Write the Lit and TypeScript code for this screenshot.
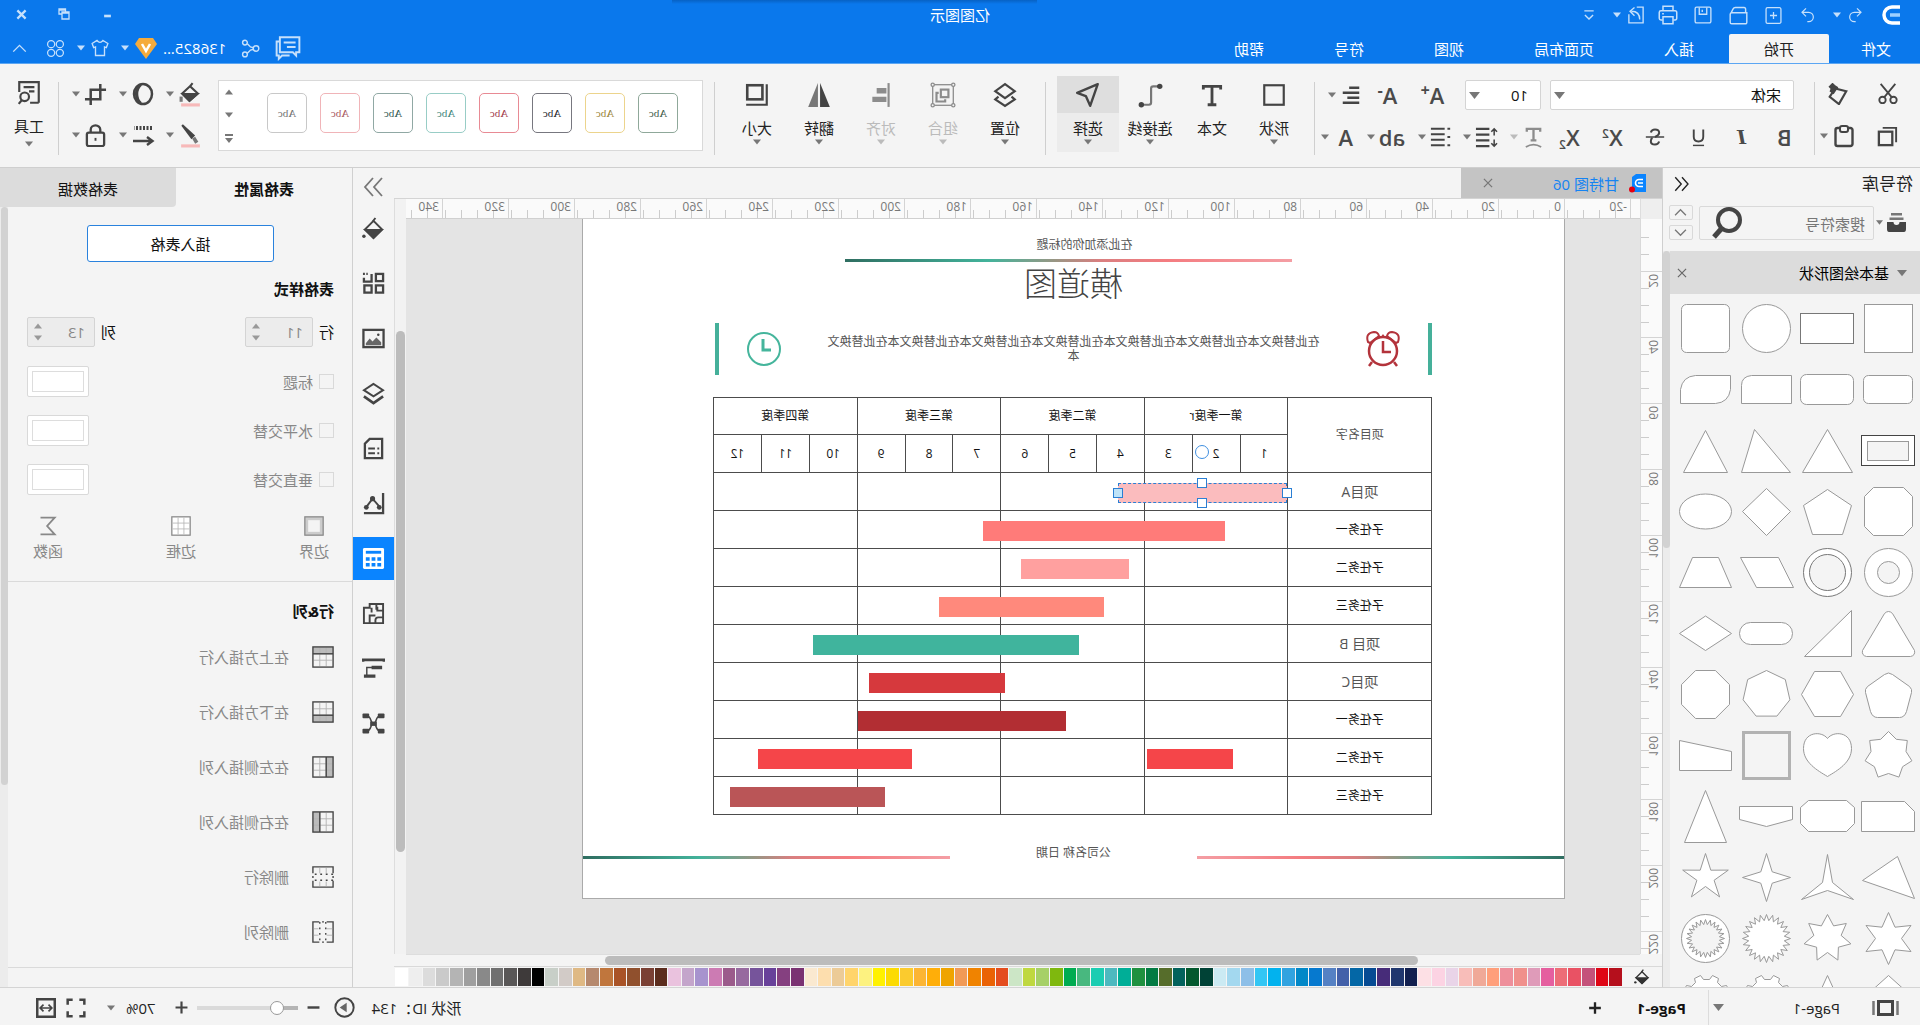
import { LitElement, html, svg, css, TemplateResult, SVGTemplateResult } from "lit";
import { customElement, state } from "lit/decorators.js";

type Frag = SVGTemplateResult;

/** Line icon on a 24-unit grid. */
const icon = (body: Frag, size = 24, weight = 2): TemplateResult => html`
  <svg class="ico" width=${size} height=${size} viewBox="0 0 24 24" fill="none" stroke="currentColor"
    stroke-width=${weight} aria-hidden="true">${body}</svg>`;

const caret = (size = 8): TemplateResult => html`
  <svg class="caret" width=${size} height=${size} viewBox="0 0 8 8" aria-hidden="true"><path d="M0 1.5h8L4 6.5z" fill="currentColor"/></svg>`;
const caretUp = html`
  <svg class="caret" width="8" height="8" viewBox="0 0 8 8" aria-hidden="true"><path d="M0 6.5h8L4 1.5z" fill="currentColor"/></svg>`;

const cross = svg`<path d="M5 5l14 14M19 5L5 19"/>`;
const bucket = svg`<path d="M10 1l3 4"/><path d="M12 4l9 9-9 9-9-9z"/><path d="M3.500 13.500h17L12 21.500z" fill="currentColor"/><circle cx="22" cy="20" r="1.800" fill="currentColor" stroke="none"/>`;
const chevL = svg`<path d="M12 3L4 12l8 9M21 3l-8 9 8 9"/>`;
const chevR = svg`<path d="M12 3l8 9-8 9M3 3l8 9-8 9"/>`;

const quick = {
  undo: svg`<path d="M9 2L3 8l6 6M3.500 8H13a7 7 0 0 1 0 14h-2"/>`,
  redo: svg`<path d="M15 2l6 6-6 6M20.500 8H11a7 7 0 0 0 0 14h2"/>`,
  add: svg`<rect x="1.500" y="1" width="21" height="22" rx="2"/><path d="M12 7v10M7 12h10"/>`,
  open: svg`<path d="M3 8V4q0-2 2-2h11q2 0 3 2l2 4M1.500 8.500h19q2 0 2 2v10q0 2-2 2h-17q-2 0-2-2z"/>`,
  save: svg`<rect x="1.500" y="1.500" width="21" height="21" rx="2"/><path d="M7 2v9h10V2M13 5v3"/>`,
  print: svg`<path d="M6 7V1.500h12V7M5 18H3.500q-2 0-2-2V9q0-2 2-2h17q2 0 2 2v7q0 2-2 2H19M6 14h12v8.500H6zM17 10.500h2"/>`,
  exportDoc: svg`<path d="M11 1.500H2.500v21h19V11"/><path d="M7 18c0-7 4-11 11-11M14 2l6 5-6 6"/>`,
};

const clip = {
  cut: svg`<path d="M4 1l12 14.500M20 1L8 15.500"/><circle cx="6" cy="18.500" r="3.500"/><circle cx="18" cy="18.500" r="3.500"/>`,
  brush: svg`<path d="M3 9l12-3 6 9-10 8z" stroke-width="2.400"/><path d="M13 5l4 6 3-2-1-3 2-2-3-3-2 2z" fill="currentColor"/>`,
  copy: svg`<path d="M3 18V3h14"/><rect x="7" y="7" width="14" height="14" stroke-width="2.400"/>`,
  paste: svg`<rect x="3.500" y="4" width="17" height="18" rx="2" stroke-width="2.400"/><rect x="8" y="2" width="8" height="6" rx="2" fill="#f4f4f4"/>`,
};

const fmt = {
  align: svg`<path d="M3 4h11M3 9.500h18M3 15h13M3 20.500h18" stroke-width="2.800"/>`,
  strike: svg`<path d="M17 6.500Q16 3 12 3 7 3 7 7q0 3 5 5M7 17.500Q8 21 12 21q5 0 5-4 0-3-2-4" stroke-width="2.400"/><path d="M1 12h22" stroke-width="1.800"/>`,
  under: svg`<path d="M6 2v9q0 6 6 6t6-6V2" stroke-width="2.400"/><path d="M5 22h14" stroke-width="1.800"/>`,
  spacing: svg`<path d="M4 3v7M4 14v7M1 6l3-3 3 3M1 18l3 3 3-3" stroke-width="1.600"/><path d="M9 3h14M9 9h14M9 15h14M9 21h14" stroke-width="2.400"/>`,
  list: svg`<path d="M8 3h15M8 9h15M8 15h15M8 21h15" stroke-width="2.400"/><path d="M2 3h3M2 12h3M2 21h3"/>`,
};

const tools = {
  shape: svg`<rect x="3" y="3" width="18" height="18"/>`,
  text: svg`<path d="M4 7V4h16v3M12 4v17M8 21h8" stroke-width="2.600"/>`,
  connector: svg`<path d="M4 4h5q2 0 2 2v13q0 2 2 2h6" stroke="#777"/><circle cx="3" cy="4" r="2.500" fill="currentColor" stroke="none"/><circle cx="20" cy="21" r="2.500" fill="currentColor" stroke="none"/>`,
  select: svg`<path d="M3 2l19 8-8 3-4 9z" stroke-linejoin="round" stroke-width="2.200"/>`,
  position: svg`<path d="M12 2l9 6.500-9 6.500-9-6.500z"/><path d="M6 13.500L3 16l9 6 9-6-3-2.500"/>`,
  group: svg`<rect x="2.500" y="2.500" width="19" height="19" stroke-width="1.200"/><rect x="7" y="7" width="7" height="7"/><path d="M16 10h2v8h-8v-2"/><g fill="#f4f4f4" stroke-width="1.200"><circle cx="2.500" cy="2.500" r="1.500"/><circle cx="21.500" cy="2.500" r="1.500"/><circle cx="2.500" cy="21.500" r="1.500"/><circle cx="21.500" cy="21.500" r="1.500"/></g>`,
  align: svg`<path d="M5 1v22" stroke-width="2"/><path d="M7 8h9M7 16h13" stroke-width="5"/>`,
  flip: svg`<path d="M11 1v22H2z" fill="currentColor" stroke="none"/><path d="M13 1v22h9z" fill="#777" stroke="none"/>`,
  size: svg`<rect x="7" y="3" width="14" height="13" stroke-width="2.400"/><path d="M3 2v19h19"/>`,
  inspect: svg`<path d="M3 21V2h18v9M3 21h8M7 6.500h10M7 10.500h5"/><circle cx="16" cy="15.500" r="4"/><path d="M18.500 18.500l3 3.500"/>`,
};

const stylers = {
  fill: svg`<path d="M3 22h18" stroke="#f7b9b9" stroke-width="3"/><path d="M10 1l3 4M12.500 4L20 11l-7 7-8-7z"/><path d="M5.500 11.500h14L13 18z" fill="currentColor"/><path d="M21 14v5" stroke="#777" stroke-width="3"/>`,
  shadow: svg`<ellipse cx="12" cy="12" rx="9" ry="10" stroke-width="2.500"/><path d="M14 3a9 10 0 0 1 0 18 11 12 0 0 0 0-18z" fill="currentColor"/>`,
  crop: svg`<path d="M7 1v16h16M1 7h16v16" stroke-width="2.600"/>`,
  line: svg`<path d="M3 22h18" stroke="#f7b9b9" stroke-width="3"/><path d="M20 2l-9 12-2-2z" fill="currentColor" stroke-width="2"/><path d="M9 14l-3 5" stroke="#777" stroke-width="3.500"/>`,
  arrow: svg`<path d="M3 5h18" stroke-width="4" stroke-dasharray="2 1.500"/><path d="M22 18H3M8 14l-5.500 4L8 22" stroke-width="2.400"/>`,
  lock: svg`<rect x="3" y="9" width="18" height="14" rx="2" stroke-width="2.400"/><path d="M7 9V6a5 4.500 0 0 1 10 0v3" stroke-width="2.400"/><path d="M12 14.500v3"/>`,
};

const side: { id: string; name: string; body: Frag }[] = [
  { id: "fill", name: "填充", body: bucket },
  { id: "grid", name: "符号", body: svg`<g stroke-width="2.400"><rect x="2" y="2" width="7.500" height="7.500"/><path d="M14 2v8h8V6M18 2h1.500M21 2h2"/><rect x="2" y="14" width="7.500" height="7.500"/><rect x="14" y="14" width="7.500" height="7.500"/></g>` },
  { id: "image", name: "图片", body: svg`<rect x="1.500" y="3" width="21" height="18" stroke-width="2.400"/><path d="M4 19v-3l5-5 4 4 3-3 4 5v2z" fill="#666" stroke="none"/><circle cx="7" cy="8" r="1.300" fill="currentColor" stroke="none"/>` },
  { id: "layers", name: "图层", body: svg`<path d="M12 2l10 6.500-10 6.500L2 8.500z"/><path d="M2 15l10 7 10-7" stroke-width="2.800"/>` },
  { id: "page", name: "页面", body: svg`<path d="M3 2h13l5 5v15H3z" stroke-width="2.400"/><path d="M6 12h2M6 17h2M10.500 12h7M10.500 17h7"/>` },
  { id: "chart", name: "图表", body: svg`<path d="M2 1v21h20" stroke-width="2.400"/><path d="M6 15l7-8 6 8"/><g fill="currentColor" stroke="none"><circle cx="6" cy="16" r="2.500"/><circle cx="13" cy="7" r="2.700"/><circle cx="19.500" cy="16" r="2.500"/></g>` },
  { id: "table", name: "表格", body: svg`<rect x="1" y="1" width="22" height="22" rx="1.500" fill="currentColor" stroke="none"/><path d="M4 5.500h16" stroke="#0a84ff" stroke-width="3"/><path d="M4 12.500h4M10 12.500h4M16 12.500h4M4 18.500h4M10 18.500h4M16 18.500h4" stroke="#0a84ff" stroke-width="3.500"/>` },
  { id: "plan", name: "平面图", body: svg`<path d="M2 2h14v4h6v16H2zM2 9h6V5M9 2v6M14 6v5M2 16h5q3 0 3 3v3M10 14h5M16 14v8M14 14h3"/>` },
  { id: "gantt", name: "甘特图", body: svg`<path d="M1 5V3h22v2M1 3h22" stroke-width="3"/><path d="M3 11h11M10 20h12" stroke-width="3.500"/><path d="M13 11h6v8" stroke-width="1.500"/>` },
  { id: "mind", name: "思维导图", body: svg`<path d="M4 4c7 0 4 8 8 8s1-8 8-8M4 20c7 0 4-8 8-8s1 8 8 8" stroke-width="1.600"/><g fill="currentColor" stroke="none"><rect x="0.500" y="1.500" width="7" height="5" rx="1"/><rect x="16.500" y="1.500" width="7" height="5" rx="1"/><rect x="0.500" y="17.500" width="7" height="5" rx="1"/><rect x="16.500" y="17.500" width="7" height="5" rx="1"/><rect x="8.500" y="10" width="7" height="4.500"/></g>` },
];

/** Star or burst outline with n outer points. */
const star = (n: number, outer: number, inner: number): string =>
  Array.from({ length: n * 2 }, (_, i) => {
    const r = i % 2 ? inner : outer;
    const a = (Math.PI * i) / n - Math.PI / 2;
    return `${(r * Math.cos(a)).toFixed(1)},${(r * Math.sin(a)).toFixed(1)}`;
  }).join(" ");

const ngon = (n: number, r: number, turn = 0): string =>
  Array.from({ length: n }, (_, i) => {
    const a = (2 * Math.PI * (i + turn)) / n - Math.PI / 2;
    return `${(r * Math.cos(a)).toFixed(1)},${(r * Math.sin(a)).toFixed(1)}`;
  }).join(" ");

const gear = svg`<path d="M-20 0v-6l-4-2 3-6 5 1 4-4-1-4 6-3 3 4h6l3-4 6 3-1 4 4 4 5-1 3 6-4 2v6z"/>`;

const shapes: Frag[] = [
  svg`<rect x="-24" y="-24" width="48" height="48"/>`,
  svg`<rect x="-26" y="-15" width="53" height="30" stroke="#777"/>`,
  svg`<circle r="24"/>`,
  svg`<rect x="-24" y="-24" width="48" height="48" rx="5"/>`,
  svg`<rect x="-24" y="-14" width="49" height="28" rx="5"/>`,
  svg`<rect x="-26" y="-15" width="53" height="30" rx="6"/>`,
  svg`<path d="M-25-14h40q10 1 10 10v18h-50z"/>`,
  svg`<path d="M-25-14h35q13 1 15 14v14h-35q-13-1-15-14z"/>`,
  svg`<rect x="-26" y="-15" width="53" height="30" stroke="#444"/><rect x="-20" y="-9" width="41" height="19" fill="#f4f4f4"/>`,
  svg`<path d="M0-21L25 22h-50z"/>`,
  svg`<path d="M12-21L25 22h-49z"/>`,
  svg`<path d="M0-20L22 22h-44z"/>`,
  svg`<path d="M-15-24h30l9 9v30l-9 9h-30l-9-9v-30z"/>`,
  svg`<path d="M0-22L24-6 15 23h-30L-24-6z"/>`,
  svg`<path d="M0-23L24 0 0 24-24 0z"/>`,
  svg`<ellipse rx="26" ry="17.500"/>`,
  svg`<circle r="24"/><circle r="11" fill="#f4f4f4"/>`,
  svg`<circle r="24" stroke="#777"/><circle r="18" fill="#f4f4f4" stroke="#777"/>`,
  svg`<path d="M-12-15h38L10 15h-37z"/>`,
  svg`<path d="M-13-15h26L26 15h-52z"/>`,
  svg`<path d="M-4-20q4-4 8 0L26 17q1 5-4 6h-44q-5-1-4-6z"/>`,
  svg`<path d="M-24-23v46h47z"/>`,
  svg`<rect x="-26" y="-11" width="53" height="22" rx="11"/>`,
  svg`<path d="M0-17.500L26 0 0 17-26 0z"/>`,
  svg`<path d="M-4-20q4-3 8 0L21-8q3 3 2 6l-5 19q-2 6-7 6h-22q-5 0-7-6l-5-19q-1-3 2-6z"/>`,
  svg`<path d="M-13-23h26L26 0 13 22h-26L-26 0z"/>`,
  svg`<polygon points=${ngon(7, 24)}/>`,
  svg`<polygon points=${ngon(8, 26, 0.5)}/>`,
  svg`<polygon points=${star(7, 24, 18)}/>`,
  svg`<path d="M0-17c6-8 24-7 24 10C24 7 10 15 0 21-10 15-24 7-24-7c0-17 18-18 24-10z"/>`,
  svg`<rect x="-23" y="-23" width="46" height="46" stroke="#b2b2b2" stroke-width="3" fill="#f4f4f4"/>`,
  svg`<path d="M-26-4L26-15v30h-52z" transform="matrix(-1 0 0 1 0 0)"/>`,
  svg`<path d="M-16-15h43v30h-53V-5z"/>`,
  svg`<path d="M-19-16h38l8 7v16l-8 8h-38l-8-8V-9z"/>`,
  svg`<path d="M-26-10h53V3L0 10-26 3z"/>`,
  svg`<path d="M0-26L21 26h-42z"/>`,
  svg`<path d="M-9-21L26 3l-52 18z"/>`,
  svg`<path d="M0-23L5 5 26 22 0 13-26 22-5 5z"/>`,
  svg`<polygon points=${star(4, 24, 8)}/>`,
  svg`<polygon points=${star(5, 24, 9)}/>`,
  svg`<polygon points=${star(6, 26, 13)}/>`,
  svg`<polygon points=${star(7, 24, 14)}/>`,
  svg`<polygon points=${star(24, 24, 18)}/>`,
  svg`<circle r="24"/><polygon points=${star(24, 19, 14)} fill="#f4f4f4"/>`,
  svg`<path d="M0-24L20-6 0 20-20-6z"/>`,
  svg`<path d="M0-24L20 20h-40z"/>`,
  gear,
  gear,
];
// The slanted block is lower on its left side.
shapes[31] = svg`<path d="M-26-4L26-15v30h-52z"/>`;

const palette = (
  "b50f1c df0615 c4527a e95264 ed6d77 e55f9f df9bb9 f0908c ee8f9b ff9f7b f0a998 f8bdb9 e9d4e8 fcd3e3 fde0e5 " +
  "12204f 20376e 472c79 064b93 0467a6 4360a9 5581c4 0679cf 0188c8 31a3e0 02b2ee 33c6f4 8dbfe8 a3d8ef cbeaf3 " +
  "004236 03582e 02625c 566d2b 037b43 1f9140 00ae97 4db9bf 1bcdb2 48b87f 00ac51 7fb80e a6d067 bfd840 cce6c6 " +
  "e44d1e ea6205 f08300 f19a56 efa400 ffae09 fcb534 fbcb2e fcdb02 fff100 fdf280 ffd46b eccb97 fddeae fae9d0 " +
  "7a3272 854080 68419a 76549b 976a9f 9b5b8b cc7bb3 a793ce c4a5cb eac2de 5b2c1d 7a4034 90502d a95327 c0763d " +
  "b6896e dfb984 d2cbc7 c8cfc8 000000 3e3a3a 595757 707070 898989 9f9f9f b4b4b4 cacaca dcdcdc eeeeee ffffff"
).split(" ");

const abcStyles: [string, string][] = [
  ["#8fa89a", "#3c5a48"], ["#ecd48c", "#9a8438"], ["#77777f", "#222228"], ["#e88a94", "#a03848"],
  ["#98cdc6", "#3c8478"], ["#90a8a4", "#305850"], ["#f0b4b8", "#a85860"], ["#c8c8c8", "#707070"],
];

interface Task { name: string; soft?: boolean; bars: { at: number; len: number; color: string; picked?: boolean }[] }
/** Positions are offsets on a chart that is 718 units wide. */
const tasks: Task[] = [
  { name: "项目A", soft: true, bars: [{ at: 145, len: 169, color: "#fbbcbe", picked: true }] },
  { name: "子任务一", bars: [{ at: 207, len: 241, color: "#ff7b79" }] },
  { name: "子任务二", bars: [{ at: 303, len: 107, color: "#ffa09f" }] },
  { name: "子任务三", bars: [{ at: 328, len: 164, color: "#ff897c" }] },
  { name: "项目 B", soft: true, bars: [{ at: 353, len: 265, color: "#40b49d" }] },
  { name: "项目C", soft: true, bars: [{ at: 426, len: 136, color: "#d6393d" }] },
  { name: "子任务一", bars: [{ at: 365, len: 208, color: "#b22e33" }] },
  { name: "子任务二", bars: [{ at: 199, len: 86, color: "#f54549" }, { at: 519, len: 154, color: "#f54549" }] },
  { name: "子任务三", bars: [{ at: 546, len: 155, color: "#ba5557" }] },
];

const cellLines = svg`<path d="M8.500 2v20M15.500 2v20M2 8.500h20M2 15.500h20" stroke="#b4b4b4" stroke-width="1"/>`;
const frame = svg`<rect x="1" y="1" width="22" height="22" stroke-width="1.500"/>`;
const rowOps: [string, Frag][] = [
  ["在上方插入行", svg`<rect x="1" y="1" width="22" height="8" fill="#bbb" stroke="none"/>${cellLines}<path d="M1 8.500h22" stroke-width="1.500"/>${frame}`],
  ["在下方插入行", svg`<rect x="1" y="15" width="22" height="8" fill="#bbb" stroke="none"/>${cellLines}<path d="M1 15.500h22" stroke-width="1.500"/>${frame}`],
  ["在左侧插入列", svg`<rect x="1" y="1" width="8" height="22" fill="#bbb" stroke="none"/>${cellLines}<path d="M8.500 1v22" stroke-width="1.500"/>${frame}`],
  ["在右侧插入列", svg`<rect x="15" y="1" width="8" height="22" fill="#bbb" stroke="none"/>${cellLines}<path d="M15.500 1v22" stroke-width="1.500"/>${frame}`],
  ["删除行", svg`<path d="M1 8V1h22v7M1 16v7h22v-7" stroke-width="1.500"/><path d="M8.500 2v6M15.500 2v6M8.500 17v5M15.500 17v5" stroke="#b4b4b4" stroke-width="1"/><path d="M1 9h22M1 15.500h22" stroke-width="1.500" stroke-dasharray="2 4"/><path d="M1 11v2M23 11v2" stroke-width="1.500"/>`],
  ["删除列", svg`<path d="M8 1H1v22h7M16 1h7v22h-7" stroke-width="1.500"/><path d="M2 8.500h6M2 15.500h6M17 8.500h5M17 15.500h5" stroke="#b4b4b4" stroke-width="1"/><path d="M9 1v22M15.500 1v22" stroke-width="1.500" stroke-dasharray="2 4"/><path d="M11 1h2M11 23h2" stroke-width="1.500"/>`],
];

const range = (from: number, to: number, step: number): number[] =>
  Array.from({ length: Math.floor((to - from) / step) + 1 }, (_, i) => from + i * step);

@customElement("app-root")
export class AppRoot extends LitElement {
  @state() private menu = "开始";
  @state() private panel = "table";

  static styles = css`
    :host { display: block; }
    * { box-sizing: border-box; }
    button { font: inherit; color: inherit; background: none; border: 0; padding: 0; cursor: pointer; }
    svg { display: block; flex: none; }
    .app { display: flex; flex-direction: column; height: 100vh; transform: scaleX(-1); background: #f4f4f4; color: #222;
      font: 15px/20px "Open Sans", "Noto Sans CJK SC", sans-serif; white-space: nowrap; overflow: hidden; }
    .caret { color: #777; }

    .blue { background: #0a78ec; color: #fff; border-bottom: 1px solid #5ba6f3; position: relative; }
    .shade { position: absolute; top: 0; left: 46%; width: 19%; height: 4px; background: linear-gradient(#0762c4, #0a78ec); }
    .blue .ico { color: #c6e0fb; }
    .blue .caret { color: #c6e0fb; }
    .title { display: grid; grid-template-columns: 1fr auto 1fr; align-items: start; height: 34px; line-height: 30px; }
    .quick { display: flex; align-items: center; padding-left: 20px; height: 30px; }
    .quick button { width: 35px; height: 30px; display: flex; align-items: center; justify-content: center; }
    .quick .split { gap: 6px; width: 44px; }
    .quick .logo { margin-right: 12px; }
    .win { display: flex; justify-content: flex-end; height: 28px; }
    .win button { width: 43px; display: grid; place-items: center; }
    .menus { display: flex; height: 29px; }
    .menus .tab { padding: 0 35px; }
    .menus .tab:first-child { padding: 0 32px 0 29px; }
    .menus .tab[aria-selected="true"] { background: #f4f4f4; color: #222; border-radius: 2px 2px 0 0; }
    .me { margin-left: auto; display: flex; align-items: center; gap: 12px; padding: 0 12px 1px 0; }
    .me button { display: flex; align-items: center; gap: 6px; }
    .me .social { margin-right: 3px; }
    .me .fold { margin-left: 7px; }

    .ribbon { display: flex; height: 104px; padding-top: 10px; border-bottom: 1px solid #cfcfcf; color: #444; }
    .group { display: flex; height: 84px; }
    .group + .group { border-image: linear-gradient(transparent 9px, #cfcfcf 9px 80px, transparent 80px) 1; border-left: 1px solid; }
    .ribbon .split { display: flex; align-items: center; gap: 4px; }
    .ribbon .btn { display: grid; place-items: center; }
    .clip { display: grid; grid-template: 40px 44px / 36px 41px; column-gap: 14px; padding-left: 14px; }
    .clip .brush { width: 36px; }
    .font { flex-direction: column; width: 500px; padding-left: 8px; }
    .line { display: flex; height: 42px; align-items: center; }
    .pick { display: grid; align-items: center; height: 30px; }
    .pick > * { grid-area: 1 / 1; }
    .pick .caret { justify-self: end; margin-right: 4px; pointer-events: none; }
    .pick.face { width: 244px; margin: 0 9px 0 12px; }
    .pick.pt { width: 76px; margin-right: 10px; }
    select { appearance: none; font: inherit; color: #111; width: 100%; height: 30px; padding: 0 12px; background: #fff;
      border: 1px solid #d4d4d4; border-radius: 2px; }
    .line .btn { width: 45px; height: 36px; }
    .line.row2 .btn { width: 43px; }
    .line .split { flex: 1; height: 36px; padding-left: 3px; }
    .glyph { font-size: 22px; line-height: 24px; font-weight: 600; color: #4a4a4a; }
    .glyph sup, .glyph sub { font-size: 12px; line-height: 0; }
    .glyph sup.sign { font-size: 16px; font-weight: 700; }
    .glyph sup { vertical-align: 8px; } .glyph sub { vertical-align: -3px; }
    .slant { font-style: italic; font-family: "DejaVu Serif", serif; font-size: 19px; }
    .off { color: #a4a4a4; } .off .ico { color: #8c8c8c; } .off .caret { color: #bbb; }
    .tools { padding: 2px 11px 6px 9px; }
    .tool { width: 62px; display: flex; flex-direction: column; align-items: center; color: #444; }
    .tool .pic { width: 100%; height: 37px; display: grid; place-items: center; }
    .tool .name { color: #222; padding-top: 5px; line-height: 20px; }
    .tool.off .name { color: #bbb; }
    .tool.on { background: #ececec; } .tool.on .pic { background: #dedede; }
    .look { flex: 1; padding: 6px 0 7px 11px; }
    .gallery { flex: 1; display: flex; justify-content: space-between; align-items: center; background: #fff; border: 1px solid #d9d9d9; padding: 0 6px 0 24px; }
    .cards { display: flex; gap: 13px; padding-bottom: 6px; overflow: hidden; }
    .card { width: 40px; height: 40px; border: 1px solid; border-radius: 5px; font: 11px/38px "Liberation Serif", serif; }
    .steps { display: flex; flex-direction: column; justify-content: space-between; height: 56px; }
    .group.stylers { border: 0; display: grid; grid-template: 40px 42px / 48px 48px 48px; padding: 0 3px 0 12px; }
    .stylers .split { padding-left: 3px; gap: 4px; }
    .end { width: 59px; justify-content: center; }
    .end .tool { width: 50px; }
    .end .caret { margin-top: 4px; }

    .body { flex: 1; display: flex; min-height: 0; }
    .library { width: 258px; border-right: 1px solid #cfcfcf; display: flex; flex-direction: column; }
    .libhead { display: flex; justify-content: space-between; align-items: center; height: 32px; padding: 0 10px 0 7px; font-size: 17px; }
    .find { display: flex; align-items: center; padding: 5px 6px 11px 14px; }
    .find .kind { display: flex; align-items: center; gap: 4px; width: 32px; }
    .search { display: flex; align-items: center; width: 175px; height: 34px; border: 1px solid #d9d9d9; border-radius: 2px; padding: 0 12px 0 8px; }
    input { font: inherit; color: inherit; }
    .search input { flex: 1; min-width: 0; border: 0; background: none; padding: 2px 0 0; }
    .search input::placeholder { color: #777; opacity: 1; }
    .updown { display: grid; gap: 5px; margin-left: 6px; }
    .updown button { width: 24px; height: 15px; border: 1px solid #d9d9d9; border-radius: 2px; display: grid; place-items: center; color: #777; }
    .shelf { flex: 1; display: flex; min-height: 0; }
    .shelfmain { flex: 1; overflow: hidden; }
    .cat { display: flex; align-items: center; gap: 8px; height: 43px; background: #dcdcdc; padding: 1px 5px 0 13px; color: #000; }
    .cat .x { margin-left: auto; color: #666; }
    .shapes { display: grid; grid-template-columns: repeat(4, 61px); padding: 4px 0 0 1px; }
    .shapes svg { fill: #fff; stroke: #999; }
    .shapes button { height: 61px; }
    .bar { display: grid; background: #ececec; }
    .bar i { display: block; background: #d2d2d2; border-radius: 4px; }
    .bar.lib { width: 7px; grid-template-rows: 297fr 439fr; }

    .work { flex: 1; min-width: 0; display: flex; flex-direction: column; }
    .docs { height: 31px; border-bottom: 1px solid #d4d4d4; }
    .doc { display: flex; align-items: center; width: 201px; height: 30px; background: #c4c4c4; color: #1583f2; padding: 0 20px 0 16px; }
    .doc .name { margin: 2px auto 0 9px; }
    .doc button { color: #777; }
    .desk { flex: 1; min-height: 0; display: grid; grid-template: 20px minmax(0, 1fr) 12px 21px / 22px minmax(0, 1fr) 12px; }
    .corner { background: #eee; border-right: 1px solid #ddd; }
    .hr { display: flex; overflow: hidden; background: #fafafa; border-bottom: 1px solid #d0d0d0; padding-left: 9px; }
    .hr span { flex: none; width: 66px; padding-left: 3px; border-left: 1px solid #d4d4d4; font-size: 12px; line-height: 16px; color: #777;
      background: repeating-linear-gradient(to right, transparent 0 15px, #ccc 15px 16px) 0 11px / 66px 20px no-repeat; }
    .hr span, .vr span { background-origin: border-box; }
    .vr { overflow: hidden; background: #fafafa; border-right: 1px solid #d9d9d9; display: flex; flex-direction: column; }
    .vr span { flex: none; height: 66px; border-top: 1px solid #d4d4d4; display: flex;
      background: repeating-linear-gradient(to bottom, transparent 0 16px, #ccc 16px 17px) 13px 0 / 10px 64px no-repeat; }
    .vr span:first-child { height: 52px; border: 0; background-position: 13px 2px; }
    .vr b { writing-mode: vertical-rl; transform: rotate(180deg); font: 12px/17px "Open Sans", sans-serif; color: #777; padding-bottom: 2px; align-self: flex-start; }
    .vbar { grid-area: 1 / 3 / 3 / 4; grid-template-rows: 132fr 522fr 102fr; background: #f2f2f2; border-right: 1px solid #ddd; padding: 0 1px; }
    .vbar i { grid-row: 2; background: #bcbcbc; border-radius: 5px; }
    .hbar { grid-area: 3 / 2 / 4 / 3; grid-template-columns: 222fr 811fr 199fr; background: #f4f4f4; border-top: 1px solid #ddd; padding: 1px 0; }
    .hbar i { grid-column: 2; background: #bcbcbc; border-radius: 5px; }
    .inks { grid-area: 4 / 1 / 5 / 4; display: flex; align-items: center; border-top: 1px solid #d9d9d9; color: #333; }
    .inks .none { width: 40px; padding-left: 12px; }
    .inks .ink { flex: 1; height: 18px; border-right: 1px solid #f4f4f4; }
    .canvas { background: #e4e4e4; overflow: hidden; }

    .page { width: 983px; height: 680px; margin-left: 75px; background: #fff; border: 1px solid #aaa; border-top: 0; padding-top: 19px;
      font-size: 12px; line-height: 14px; color: #555; }
    .sub { text-align: center; padding-right: 22px; }
    .rule { height: 3px; background: linear-gradient(to right, #f49ea4, #f47c80 28%, #d97f80 43%, #999684 53%, #43b39b 68%, #2f6e61); }
    .head { width: 447px; margin: 7px 0 2px 272px; }
    .big { margin: 0; font-size: 33px; line-height: 40px; font-weight: 300; color: #444; text-align: center; }
    .chart { width: 719px; margin-left: 132px; }
    .intro { display: flex; align-items: center; height: 52px; margin: 19px 0 22px; padding-right: 2px; }
    .intro .post { width: 4px; height: 52px; background: #45b09a; }
    .intro svg { margin: 0 34px 0 28px; }
    .intro p + svg { margin: 0 28px 0 34px; }
    .intro p { margin: 0; padding: 0 10px; flex: 1; text-align: center; white-space: normal; }
    .gantt { position: relative; }
    table { width: 100%; border-collapse: collapse; table-layout: fixed; color: #111; border: 1px solid #777; }
    th, td { border: 1px solid #4c4c4c; padding: 0; height: 38px; font-weight: 400; text-align: center; }
    .q th { height: 37px; }
    .soft { color: #555; }
    th.proj { font-size: 14px; color: #555; }
    .task { position: absolute; height: 20px; }
    .task.picked { outline: 1px dashed #2b7fd4; outline-offset: -1px; }
    .grip { position: absolute; width: 10px; height: 10px; background: #fff; border: 1px solid #2b7fd4; }
    .grip.w { left: -5px; top: 5px; } .grip.e { right: -5px; top: 5px; background: #bfe3f8; }
    .grip.n { left: calc(50% - 5px); top: -5px; } .grip.s { left: calc(50% - 5px); bottom: -5px; }
    .spin { position: absolute; left: calc(50% - 7px); top: -38px; width: 14px; height: 14px; border: 1px solid #3f8fe0; border-radius: 50%; background: #fff; }
    .foot { display: flex; justify-content: space-between; margin-top: 31px; }
    .foot .rule { width: 367px; margin-top: 10px; }
    .foot .rule:first-child { transform: rotate(180deg); }

    .dock { width: 42px; border-right: 1px solid #d0d0d0; display: flex; flex-direction: column; color: #444; }
    .dock button { height: 43px; margin-bottom: 12px; display: grid; place-items: center; }
    .dock .fold { height: 38px; margin-bottom: 1px; color: #777; }
    .dock button[aria-pressed="true"] { background: #0a84ff; color: #fff; }

    .props { width: 352px; display: flex; flex-direction: column; color: #111; }
    .ptabs { display: grid; grid-template-columns: 1fr 1fr; height: 39px; }
    .ptabs button { padding-top: 2px; }
    .ptabs [aria-selected="true"] { font-weight: 700; }
    .ptabs [aria-selected="false"] { background: #dcdcdc; border-radius: 0 0 0 4px; }
    .pbody { flex: 1; display: flex; min-height: 0; }
    .pmain { flex: 1; overflow: hidden; }
    .bar.prop { width: 8px; grid-template-rows: 578fr 202fr; padding-right: 1px; }
    section { padding: 18px 19px 0 18px; border-bottom: 1px solid #dadada; }
    .insert { display: block; width: 187px; height: 37px; margin: 0 auto; background: #fff; border: 1px solid #2a82dd; border-radius: 3px; }
    h3 { margin: 17px 0 18px; font-size: 15px; line-height: 20px; font-weight: 700; }
    .dims { display: flex; justify-content: space-between; margin-bottom: 19px; }
    .num { display: flex; align-items: center; gap: 6px; }
    .num .box { display: flex; align-items: center; justify-content: space-between; width: 68px; height: 30px; padding: 0 6px 0 9px; background: #ececec; border: 1px solid #d4d4d4; border-radius: 2px; }
    .num input { width: 30px; border: 0; padding: 0; background: none; color: #888; }
    .num .steps { height: 20px; }
    .num .caret { color: #999; }
    .opt { display: flex; justify-content: space-between; align-items: center; margin-bottom: 18px; height: 31px; color: #888; }
    .opt label { display: flex; align-items: center; gap: 6px; }
    .opt input { appearance: none; width: 15px; height: 15px; margin: 0; border: 1px solid #d9d9d9; background: #f4f4f4; }
    .swatch { width: 62px; height: 31px; padding: 4px; background: #fff; border: 1px solid #d9d9d9; border-radius: 2px; }
    .swatch i { display: block; height: 21px; border: 1px solid #ddd; }
    .trio { display: flex; justify-content: space-between; padding: 3px 6px 20px 5px; color: #888; }
    .trio button { display: grid; justify-items: center; gap: 5px; }
    section.ops { padding-top: 2px; padding-bottom: 8px; }
    .ops button { display: flex; align-items: center; gap: 23px; height: 55px; color: #888; }
    .ops .ico { color: #444; }
    .ops h3 { margin-bottom: 8px; }

    .status { display: flex; align-items: center; height: 38px; border-top: 1px solid #d4d4d4; color: #222; padding-top: 2px; }
    .status .view { width: 80px; padding-left: 21px; color: #444; }
    .status .pages { display: flex; justify-content: space-between; align-items: center; align-self: stretch; width: 132px; border-right: 1px solid #dcdcdc; padding-right: 4px; }
    .status .cur { font-weight: 700; color: #111; margin: 0 35px 0 22px; }
    .status .right { margin-left: auto; display: flex; align-items: center; color: #444; padding-right: 36px; }
    .status .right > * { flex: none; }
    .shapeid { color: #222; margin-right: 17px; }
    .play { margin-right: 14px; }
    .zoom { appearance: none; width: 101px; height: 16px; margin: 0 9px; background: linear-gradient(to right, #b4b4b4 20%, #dadada 20%) 0 6px / 100% 4px no-repeat; }
    .zoom::-webkit-slider-thumb { appearance: none; width: 14px; height: 14px; border-radius: 50%; background: #fff; border: 1px solid #999; }
    .pct { color: #222; margin: 0 11px 0 19px; }
    .status .caret { margin-right: 21px; }
    .status .pages .caret { margin-right: 0; }
    .status .right .full { margin-right: 10px; }
  `;

  private split(label: string, body: TemplateResult, off = false) {
    return html`<button class="split ${off ? "off" : ""}" aria-label=${label}>${body}${caret()}</button>`;
  }

  private tool(name: string, body: Frag, opts: { on?: boolean; off?: boolean; plain?: boolean } = {}) {
    return html`<button class="tool ${opts.on ? "on" : ""} ${opts.off ? "off" : ""}">
      <span class="pic">${icon(body, 26)}</span><span class="name">${name}</span>${opts.plain ? "" : caret()}
    </button>`;
  }

  private header() {
    const names = ["文件", "开始", "插入", "页面布局", "视图", "符号", "帮助"];
    return html`<header class="blue">
      <div class="shade"></div>
      <div class="title">
        <div class="quick">
          <svg class="logo" width="18" height="20" viewBox="0 0 18 20" fill="none" stroke-width="3.500" aria-hidden="true">
            <path d="M0 2h8a8 8 0 0 1 0 16H0" stroke="#fff"/><path d="M0 10h10" stroke="#9fd0ff"/></svg>
          <button class="split" aria-label="撤销">${icon(quick.undo, 16, 1.8)}${caret()}</button>
          <button aria-label="重做">${icon(quick.redo, 16, 1.8)}</button>
          <button aria-label="新建">${icon(quick.add, 17, 1.8)}</button>
          <button aria-label="打开">${icon(quick.open, 19, 1.8)}</button>
          <button aria-label="保存">${icon(quick.save, 18, 1.8)}</button>
          <button aria-label="打印">${icon(quick.print, 20, 1.8)}</button>
          <button class="split" aria-label="导出">${icon(quick.exportDoc, 18, 1.8)}${caret()}</button>
          <button aria-label="自定义">${icon(svg`<path d="M4 5h16M5 12l7 7 7-7"/>`, 14, 2.4)}</button>
        </div>
        <div>亿图图示</div>
        <div class="win">
          <button aria-label="最小化">${icon(svg`<path d="M3 16h18" stroke-width="7"/>`, 9)}</button>
          <button aria-label="还原">${icon(svg`<path d="M9 8V2h13v10h-6M2 8h14v14H2zM2 10h14M9 4h13"/>`, 12, 2.6)}</button>
          <button aria-label="关闭">${icon(svg`<path d="M3 3l18 18M21 3L3 21"/>`, 11, 5)}</button>
        </div>
      </div>
      <nav class="menus" role="tablist">
        ${names.map((n) => html`<button class="tab" role="tab" aria-selected=${this.menu === n} @click=${() => (this.menu = n)}>${n}</button>`)}
        <div class="me">
          <button class="social" aria-label="消息">${icon(svg`<path d="M1.500 2h18v14h-12l-3 3v-3h-3zM5 7h11M5 11h8"/><path d="M19.500 6h3v13h-2v3l-3-3h-7"/>`, 26, 1.8)}</button>
          <button class="social" aria-label="分享">${icon(svg`<circle cx="5" cy="12" r="3.500"/><circle cx="19" cy="4.500" r="3"/><circle cx="19" cy="19.500" r="3"/><path d="M8 11l4-1 4-4M8 13l4 1 4 4"/>`, 19, 1.8)}</button>
          <button>136825...<svg width="22" height="21" viewBox="0 0 22 21" aria-hidden="true"><path d="M4 0h14l4 6-11 15L0 6z" fill="#f5ab3c"/><path d="M7 6l4 7 4-7" fill="none" stroke="#fff" stroke-width="2.500"/></svg>${caret()}</button>
          <button aria-label="主题">${icon(svg`<path d="M8 2L1.500 6l2 5.500 2.500-1V22h12V10.500l2.500 1 2-5.500L16 2q-4 5-8 0z"/>`, 18, 1.8)}${caret()}</button>
          <button aria-label="应用">${icon(svg`<circle cx="6.500" cy="6.500" r="4.500"/><circle cx="17.500" cy="6.500" r="4.500"/><circle cx="6.500" cy="17.500" r="4.500"/><circle cx="17.500" cy="17.500" r="4.500"/>`, 19, 1.6)}</button>
          <button class="fold" aria-label="收起功能区">${icon(svg`<path d="M2 17L12 7l10 10"/>`, 15, 2.2)}</button>
        </div>
      </nav>
    </header>`;
  }

  private ribbon() {
    const g = (cls: string, t: unknown) => html`<span class="glyph ${cls}">${t}</span>`;
    return html`<div class="ribbon">
      <div class="group clip">
        <button class="btn" aria-label="剪切">${icon(clip.cut, 22)}</button>
        <button class="btn brush" aria-label="格式刷">${icon(clip.brush, 22)}</button>
        <button class="btn" aria-label="复制">${icon(clip.copy, 23)}</button>
        ${this.split("粘贴", icon(clip.paste, 24))}
      </div>
      <div class="group font">
        <div class="line">
          <div class="pick face"><select aria-label="字体"><option>宋体</option></select>${caret(11)}</div>
          <div class="pick pt"><select aria-label="字号"><option>10</option></select>${caret(11)}</div>
          <button class="btn" aria-label="增大字号">${g("", html`A<sup class="sign">+</sup>`)}</button>
          <button class="btn" aria-label="减小字号">${g("", html`A<sup class="sign">-</sup>`)}</button>
          ${this.split("对齐方式", icon(fmt.align, 22))}
        </div>
        <div class="line row2">
          <button class="btn" aria-label="加粗">${g("", "B")}</button>
          <button class="btn" aria-label="斜体">${g("slant", "I")}</button>
          <button class="btn" aria-label="下划线">${icon(fmt.under, 19)}</button>
          <button class="btn" aria-label="删除线">${icon(fmt.strike, 20)}</button>
          <button class="btn" aria-label="上标">${g("", html`X<sup>2</sup>`)}</button>
          <button class="btn" aria-label="下标">${g("", html`X<sub>2</sub>`)}</button>
          ${this.split("文字路径", icon(svg`<path d="M5 6V3h14v3M12 3v12M9 15h6" stroke-width="2.400"/><path d="M4 22q8-5 16 0" stroke-width="1.800"/>`, 23), true)}
          ${this.split("行距", icon(fmt.spacing, 23))}
          ${this.split("项目符号", icon(fmt.list, 22))}
          ${this.split("突出显示", g("", "ab"))}
          ${this.split("字体颜色", html`<span class="glyph">&nbsp;A&nbsp;</span>`)}
        </div>
      </div>
      <div class="group tools">
        ${this.tool("形状", tools.shape)}${this.tool("文本", tools.text, { plain: true })}
        ${this.tool("连接线", tools.connector)}${this.tool("选择", tools.select, { on: true })}
      </div>
      <div class="group tools">
        ${this.tool("位置", tools.position)}${this.tool("组合", tools.group, { off: true })}
        ${this.tool("对齐", tools.align, { off: true })}${this.tool("翻转", tools.flip)}${this.tool("大小", tools.size)}
      </div>
      <div class="group look">
        <div class="gallery">
          <div class="cards">${abcStyles.map(([line, ink]) => html`<button class="card" style="border-color:${line};color:${ink}">Abc</button>`)}</div>
          <div class="steps">${caretUp}${caret()}<svg width="8" height="10" viewBox="0 0 8 10" fill="#777" aria-hidden="true"><path d="M0 0h8v2H0zM0 4h8L4 9z"/></svg></div>
        </div>
      </div>
      <div class="group stylers">
        ${this.split("填充", icon(stylers.fill, 25))}${this.split("阴影", icon(stylers.shadow, 24))}${this.split("裁剪", icon(stylers.crop, 23))}
        ${this.split("线条", icon(stylers.line, 25))}${this.split("箭头", icon(stylers.arrow, 24))}${this.split("锁定", icon(stylers.lock, 23))}
      </div>
      <div class="group end">${this.tool("工具", tools.inspect)}</div>
    </div>`;
  }

  private library() {
    return html`<aside class="library">
      <div class="libhead"><span>符号库</span><button aria-label="折叠">${icon(chevL, 18, 1.8)}</button></div>
      <div class="find">
        <button class="kind" aria-label="符号分类"><svg width="19" height="19" viewBox="0 0 19 19" fill="#444" aria-hidden="true"><path d="M4 0h11v2.500H4zM2.500 4.500h14V7h-14z" fill="#777"/><path d="M0 9h6.500q0 3 3 3t3-3H19v7q0 3-2 3H2q-2 0-2-3z"/></svg>${caret(7)}</button>
        <div class="search"><input type="text" placeholder="搜索符号" aria-label="搜索符号" />
          <svg width="30" height="32" viewBox="0 0 30 32" fill="none" stroke="#444" aria-hidden="true"><circle cx="13" cy="13" r="11" stroke-width="4"/><path d="M20 21l8 9" stroke-width="5"/></svg></div>
        <div class="updown">
          <button aria-label="上一个">${icon(svg`<path d="M2 17L12 7l10 10"/>`, 13, 2.4)}</button>
          <button aria-label="下一个">${icon(svg`<path d="M2 7l10 10L22 7"/>`, 13, 2.4)}</button>
        </div>
      </div>
      <div class="shelf">
        <div class="shelfmain">
          <div class="cat">${caret(10)}<span>基本绘图形状</span><button class="x" aria-label="关闭分类">${icon(cross, 14)}</button></div>
          <div class="shapes">${shapes.map((s, i) => html`<button aria-label="形状 ${i + 1}"><svg width="61" height="61" viewBox="-30.500 -30.500 61 61">${s}</svg></button>`)}</div>
        </div>
        <div class="bar lib"><i></i></div>
      </div>
    </aside>`;
  }

  private chart() {
    return html`<div class="page">
      <div class="sub">在此添加你的标题</div>
      <div class="rule head"></div>
      <h1 class="big">横道图</h1>
      <div class="chart">
        <div class="intro">
          <i class="post"></i>
          <svg width="34" height="36" viewBox="0 0 34 36" fill="none" stroke="#b3333b" stroke-width="2.500" aria-hidden="true">
            <ellipse cx="17" cy="20" rx="14" ry="14"/><path d="M17 10v11h-8M6 31l-3 4M28 31l3 4"/>
            <path d="M2 11Q-1 2 8 1q4 0 5 4L4 12zM32 11q3-9-6-10-4 0-5 4l9 7z" stroke-width="2"/><path d="M15 6l2-3 2 3z" fill="#b3333b" stroke="none"/></svg>
          <p>${"在此替换文本".repeat(7)}</p>
          <svg width="34" height="34" viewBox="0 0 34 34" fill="none" stroke="#45b59c" aria-hidden="true"><circle cx="17" cy="17" r="16" stroke-width="2"/><path d="M18 7v11h-8" stroke-width="3"/></svg>
          <i class="post"></i>
        </div>
        <div class="gantt">
          <table>
            <colgroup><col style="width:20%" />${range(1, 12, 1).map(() => html`<col />`)}</colgroup>
            <thead>
              <tr class="q"><th rowspan="2" class="soft">项目名字</th>${["第一季度r", "第二季度", "第三季度", "第四季度"].map((q) => html`<th colspan="3">${q}</th>`)}</tr>
              <tr>${range(1, 12, 1).map((m) => html`<th>${m}</th>`)}</tr>
            </thead>
            <tbody>${tasks.map((t) => html`<tr><th class=${t.soft ? "proj" : ""}>${t.name}</th>${[1, 2, 3, 4].map(() => html`<td colspan="3"></td>`)}</tr>`)}</tbody>
          </table>
          ${tasks.map((t, row) => t.bars.map((b) => html`<div class="task ${b.picked ? "picked" : ""}"
            style="left:${(b.at / 718) * 100}%;width:${(b.len / 718) * 100}%;top:${86 + row * 38}px;background:${b.color}">
            ${b.picked ? html`<i class="grip n"></i><i class="grip s"></i><i class="grip w"></i><i class="grip e"></i><i class="spin"></i>` : ""}</div>`))}
        </div>
      </div>
      <div class="foot"><i class="rule"></i><span>公司名称 日期</span><i class="rule"></i></div>
    </div>`;
  }

  private work() {
    return html`<main class="work">
      <div class="docs"><div class="doc">
        <svg width="18" height="19" viewBox="0 0 18 19" aria-hidden="true"><path d="M0 0h10l4 3v15H0z" fill="#0a84ff"/><path d="M3 5.500h4a3.500 3.500 0 0 1 0 7H3M3 9h5" fill="none" stroke="#fff" stroke-width="1.600"/><circle cx="14" cy="15.500" r="3" fill="#e60012"/></svg>
        <span class="name">甘特图 06</span><button aria-label="关闭文档">${icon(cross, 14, 2.2)}</button>
      </div></div>
      <div class="desk">
        <div class="corner"></div>
        <div class="hr">${range(-20, 340, 20).map((n) => html`<span>${n}</span>`)}</div>
        <div class="vr"><span></span>${range(20, 220, 20).map((n) => html`<span><b>${n}</b></span>`)}</div>
        <div class="canvas">${this.chart()}</div>
        <div class="bar vbar"><i></i></div>
        <div class="bar hbar"><i></i></div>
        <div class="inks"><button class="none" aria-label="填充颜色">${icon(bucket, 16)}</button>
          ${palette.map((c) => html`<button class="ink" aria-label="#${c}" style="background:#${c}"></button>`)}</div>
      </div>
    </main>`;
  }

  private num(label: string, value: string) {
    return html`<label class="num"><span>${label}</span><span class="box"><input type="text" .value=${value} disabled /><span class="steps">${caretUp}${caret()}</span></span></label>`;
  }

  private props() {
    return html`<aside class="props">
      <div class="ptabs" role="tablist"><button role="tab" aria-selected="true">表格属性</button><button role="tab" aria-selected="false">表格数据</button></div>
      <div class="pbody">
        <div class="pmain">
          <section>
            <button class="insert">插入表格</button>
            <h3>表格样式</h3>
            <div class="dims">${this.num("行", "11")}${this.num("列", "13")}</div>
            ${["标题", "水平交替", "垂直交替"].map((n) => html`<div class="opt"><label><input type="checkbox" />${n}</label><button class="swatch" aria-label="${n}颜色"><i></i></button></div>`)}
            <div class="trio">
              <button>${icon(svg`<rect x="3" y="3" width="18" height="18" stroke="#ccc" stroke-width="4"/><rect x="1" y="1" width="22" height="22" stroke-width="1.500"/>`, 20)}<span>边界</span></button>
              <button>${icon(svg`<rect x="1" y="1" width="22" height="22" stroke-width="1.500" fill="#fff"/>${cellLines}`, 20)}<span>边框</span></button>
              <button>${icon(svg`<path d="M21 2H4l9 10-9 10h17"/>`, 20, 2.2)}<span>函数</span></button>
            </div>
          </section>
          <section class="ops">
            <h3>行&amp;列</h3>
            ${rowOps.map(([n, body]) => html`<button>${icon(body, 22)}<span>${n}</span></button>`)}
          </section>
        </div>
        <div class="bar prop"><i></i></div>
      </div>
    </aside>`;
  }

  private status() {
    return html`<footer class="status">
      <button class="view" aria-label="视图"><svg width="27" height="16" viewBox="0 0 27 16" fill="none" stroke="currentColor" aria-hidden="true"><path d="M1.500 1v14M25.500 1v14" stroke="#777" stroke-width="2.500"/><rect x="6.500" y="1.500" width="14" height="13" stroke-width="3"/></svg></button>
      <button class="pages">Page-1${caret(11)}</button>
      <button class="cur">Page-1</button>
      <button aria-label="添加页面">${icon(svg`<path d="M12 2v20M2 12h20"/>`, 14, 4)}</button>
      <div class="right">
        <span class="shapeid">形状 ID：134</span>
        <button class="play" aria-label="演示">${icon(svg`<circle cx="12" cy="12" r="10.500"/><path d="M9.500 6.500l8 5.500-8 5.500z" fill="#666" stroke="none"/>`, 21, 2.2)}</button>
        <button aria-label="缩小">${icon(svg`<path d="M1 12h22"/>`, 13, 4.5)}</button>
        <input class="zoom" type="range" min="0" max="100" value="16" aria-label="缩放" />
        <button aria-label="放大">${icon(svg`<path d="M12 1v22M1 12h22"/>`, 13, 4)}</button>
        <span class="pct">70%</span>${caret(8)}
        <button class="full" aria-label="全屏">${icon(svg`<path d="M2 8V2h6M16 2h6v6M22 16v6h-6M8 22H2v-6"/>`, 20, 3)}</button>
        <button aria-label="适应宽度">${icon(svg`<rect x="1.500" y="1.500" width="21" height="21" stroke-width="3"/><path d="M5 12h14M9 8l-4 4 4 4M15 8l4 4-4 4"/>`, 20)}</button>
      </div>
    </footer>`;
  }

  render() {
    return html`<div class="app">
      ${this.header()}${this.ribbon()}
      <div class="body">
        ${this.library()}${this.work()}
        <nav class="dock">
          <button class="fold" aria-label="折叠">${icon(chevR, 24, 1.8)}</button>
          ${side.map((s) => html`<button aria-label=${s.name} aria-pressed=${this.panel === s.id} @click=${() => (this.panel = s.id)}>${icon(s.body, 23)}</button>`)}
        </nav>
        ${this.props()}
      </div>
      ${this.status()}
    </div>`;
  }
}
